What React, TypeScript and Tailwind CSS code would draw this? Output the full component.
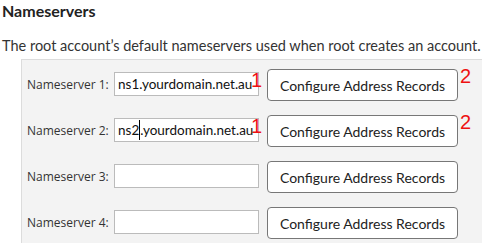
import type { ReactNode } from "react";

type Row = {
  label: string;
  value: string;
  caretAt?: number;
  marks?: boolean;
};

const rows: Row[] = [
  { label: "Nameserver 1:", value: "ns1.yourdomain.net.au", marks: true },
  { label: "Nameserver 2:", value: "ns2.yourdomain.net.au", caretAt: 3, marks: true },
  { label: "Nameserver 3:", value: "" },
  { label: "Nameserver 4:", value: "" },
];

function Mark({ children, className }: { children: ReactNode; className: string }) {
  return (
    <span
      className={`absolute font-['Liberation_Sans',Arial,sans-serif] text-[20px] leading-none text-[#ee1111] ${className}`}
    >
      {children}
    </span>
  );
}

function NameserverRow({ row }: { row: Row }) {
  const before = row.caretAt !== undefined ? row.value.slice(0, row.caretAt) : row.value;
  const after = row.caretAt !== undefined ? row.value.slice(row.caretAt) : "";

  return (
    <div className="relative flex h-[32px] items-center">
      <label className="w-[87px] shrink-0 font-['Open_Sans',sans-serif] text-[12px] text-[#333]">{row.label}</label>
      <div className="mt-[-2px] flex h-[24px] w-[145px] shrink-0 items-center overflow-hidden border border-[#bbb] bg-white pl-[3px] text-[13.5px] text-[#111]">
        <span className="whitespace-nowrap">{before}</span>
        {row.caretAt !== undefined && <span className="h-[20px] w-px bg-black" />}
        <span className="whitespace-nowrap">{after}</span>
      </div>
      <button className="ml-[8px] h-[32px] w-[191px] shrink-0 rounded-[4px] border border-[#777] bg-white text-[14px] text-[#222]">
        Configure Address Records
      </button>
      {row.marks && (
        <>
          <Mark className="left-[224px] top-[1px]">1</Mark>
          <Mark className="left-[433px] top-[-3px]">2</Mark>
        </>
      )}
    </div>
  );
}

export default function App() {
  return (
    <div className="h-[243px] w-[482px] overflow-hidden bg-white font-['Lato',sans-serif]">
      <h2 className="pl-[2px] pt-[1px] text-[16px] font-bold leading-[20px] text-[#222]">Nameservers</h2>
      <p className="mt-[15px] whitespace-nowrap pl-[2px] text-[14.5px] leading-[20px] text-[#333]">
        The root account’s default nameservers used when root creates an account.
      </p>
      <div className="ml-[21px] mt-[3px] flex h-[200px] flex-col gap-[14px] border-l border-t border-[#dcdcdc] bg-[#f3f3f3] pl-[5px] pt-[9px]">
        {rows.map((row) => (
          <NameserverRow key={row.label} row={row} />
        ))}
      </div>
    </div>
  );
}
